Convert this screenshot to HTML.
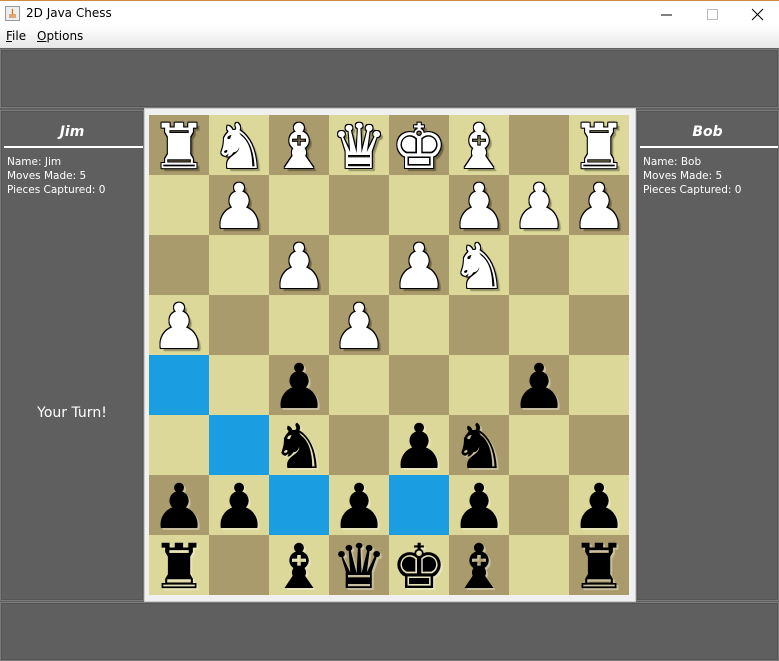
<!DOCTYPE html><html><head><style>
*{margin:0;padding:0;box-sizing:border-box}
body{width:779px;height:661px;background:#616161;position:relative;overflow:hidden;font-family:"DejaVu Sans","Liberation Sans",sans-serif}
.title{position:absolute;left:0;top:0;width:779px;height:26px;background:#fff;border-top:1px solid #d08a4a}
.title span{position:absolute;left:26px;top:5px;font-size:12px;color:#000}
.menu{position:absolute;left:0;top:26px;width:779px;height:22px;background:linear-gradient(#fff,#e6e6e6);font-size:12px}
.menu span{position:absolute;top:3px}
.panel{position:absolute;background:#5f5f5f;border:1px solid #7a7a7a;box-shadow:inset 0 0 0 1px #555}
.side{color:#fff}
.side h3{position:absolute;left:0;width:100%;top:13px;text-align:center;font:italic bold 14px "DejaVu Sans",sans-serif}
.side .ln{position:absolute;left:3px;right:0;top:35px;height:2px;background:#fff}
.side p{position:absolute;left:6px;top:44px;font-size:10.5px;line-height:14px}
.frame{position:absolute;left:144px;top:108px;width:492px;height:494px;background:#f0f0f0;border:1px solid #ccc}
.board{position:absolute;left:149px;top:115px;width:480px;height:480px;display:grid;grid-template-columns:repeat(8,60px);grid-template-rows:repeat(8,60px)}
.board div{position:relative;font-size:62px;line-height:60px;font-family:"DejaVu Sans",sans-serif;text-align:center}
.board span{position:absolute;left:0;top:2px;width:60px;text-align:center}
.l{background:#dcd899}.d{background:#a99b6b}.b{background:#1b9de1}
.w span{color:#fff;text-shadow:1px 0 0 #000,-1px 0 0 #000,0 1px 0 #000,0 -1px 0 #000,1px 1px 0 #000,-1px -1px 0 #000,1px -1px 0 #000,-1px 1px 0 #000,3px 3px 1px rgba(0,0,0,.35)}
.k span{color:#000;text-shadow:2px 2px 0 rgba(255,255,255,.35)}
</style></head><body>
<div class="title"><svg style="position:absolute;left:5px;top:5px" width="15" height="15"><rect x=".5" y=".5" width="14" height="14" fill="#eee" stroke="#999"/><path d="M4 11h7M4 9h7M7 3c2 2-1 3 1 5" stroke="#c60" fill="none"/></svg><span>2D Java Chess</span>
<svg style="position:absolute;left:660px;top:7px" width="110" height="14"><path d="M1 7h11" stroke="#000"/><rect x="47.5" y="1.5" width="10" height="10" fill="none" stroke="#bbb"/><path d="M92 1l11 11M103 1l-11 11" stroke="#000"/></svg></div>
<div class="menu"><span style="left:6px"><u>F</u>ile</span><span style="left:37px"><u>O</u>ptions</span></div>
<div class="panel" style="left:0;top:49px;width:779px;height:59px"></div>
<div class="panel side" style="left:0;top:110px;width:144px;height:491px"><h3>Jim</h3><div class="ln"></div><p>Name: Jim<br>Moves Made: 5<br>Pieces Captured: 0</p><div style="position:absolute;left:0;width:100%;top:294px;text-align:center;font-size:14px">Your Turn!</div></div>
<div class="panel side" style="left:636px;top:110px;width:143px;height:491px"><h3>Bob</h3><div class="ln"></div><p>Name: Bob<br>Moves Made: 5<br>Pieces Captured: 0</p></div>
<div class="panel" style="left:0;top:602px;width:779px;height:59px"></div>
<div class="frame"></div>
<div class="board">
<div class="d w"><span>♜</span></div><div class="l w"><span>♞</span></div><div class="d w"><span>♝</span></div><div class="l w"><span>♛</span></div><div class="d w"><span>♚</span></div><div class="l w"><span>♝</span></div><div class="d"></div><div class="l w"><span>♜</span></div>
<div class="l"></div><div class="d w"><span>♟</span></div><div class="l"></div><div class="d"></div><div class="l"></div><div class="d w"><span>♟</span></div><div class="l w"><span>♟</span></div><div class="d w"><span>♟</span></div>
<div class="d"></div><div class="l"></div><div class="d w"><span>♟</span></div><div class="l"></div><div class="d w"><span>♟</span></div><div class="l w"><span>♞</span></div><div class="d"></div><div class="l"></div>
<div class="l w"><span>♟</span></div><div class="d"></div><div class="l"></div><div class="d w"><span>♟</span></div><div class="l"></div><div class="d"></div><div class="l"></div><div class="d"></div>
<div class="b"></div><div class="l"></div><div class="d k"><span>♟</span></div><div class="l"></div><div class="d"></div><div class="l"></div><div class="d k"><span>♟</span></div><div class="l"></div>
<div class="l"></div><div class="b"></div><div class="l k"><span>♞</span></div><div class="d"></div><div class="l k"><span>♟</span></div><div class="d k"><span>♞</span></div><div class="l"></div><div class="d"></div>
<div class="d k"><span>♟</span></div><div class="l k"><span>♟</span></div><div class="b"></div><div class="l k"><span>♟</span></div><div class="b"></div><div class="l k"><span>♟</span></div><div class="d"></div><div class="l k"><span>♟</span></div>
<div class="l k"><span>♜</span></div><div class="d"></div><div class="l k"><span>♝</span></div><div class="d k"><span>♛</span></div><div class="l k"><span>♚</span></div><div class="d k"><span>♝</span></div><div class="l"></div><div class="d k"><span>♜</span></div>
</div>
</body></html>
